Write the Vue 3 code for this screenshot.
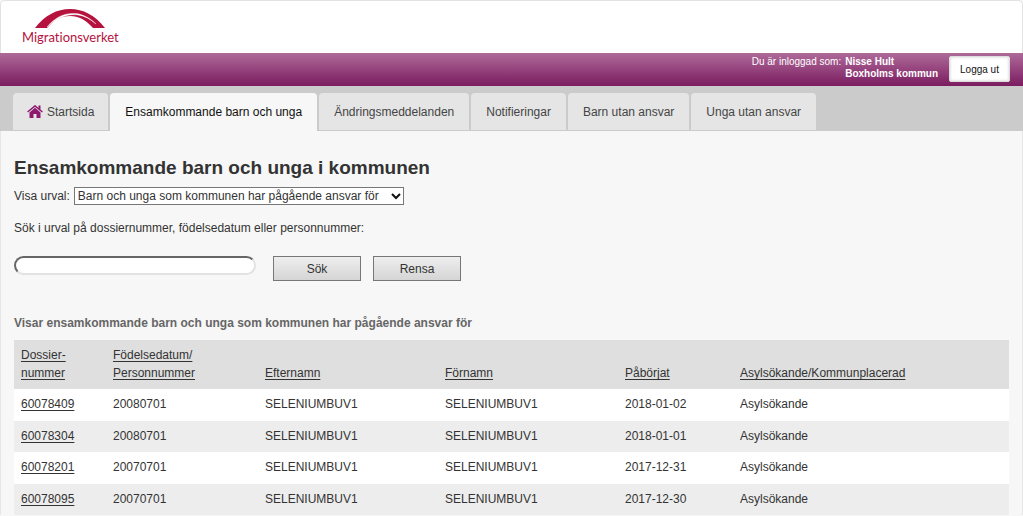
<script setup>
import { ref } from 'vue'

const tabs = [
  { label: 'Startsida', icon: true },
  { label: 'Ensamkommande barn och unga', active: true },
  { label: 'Ändringsmeddelanden' },
  { label: 'Notifieringar' },
  { label: 'Barn utan ansvar' },
  { label: 'Unga utan ansvar' },
]
const query = ref('')
const rows = [
  ['60078409', '20080701', 'SELENIUMBUV1', 'SELENIUMBUV1', '2018-01-02', 'Asylsökande'],
  ['60078304', '20080701', 'SELENIUMBUV1', 'SELENIUMBUV1', '2018-01-01', 'Asylsökande'],
  ['60078201', '20070701', 'SELENIUMBUV1', 'SELENIUMBUV1', '2017-12-31', 'Asylsökande'],
  ['60078095', '20070701', 'SELENIUMBUV1', 'SELENIUMBUV1', '2017-12-30', 'Asylsökande'],
]
</script>

<template>
  <div class="page">
    <header class="brand">
      <a href="#" class="logo">
        <svg class="arch" viewBox="0 0 70 19" aria-hidden="true">
          <path d="M0 19C10 6 22 0 35 0s25 6 35 19H58C51 11 44 7 35 7 26 7 19 11 12 19Z" fill="#b5123e" />
          <path d="M12 18C21 7 32 3 43 4.800 51 6.500 57 11 61 15 56 10.500 50 7 43 5.900 32 4.500 22 9 12 18Z" fill="#fff" stroke="#fff" stroke-width="0.400" />
        </svg>
        <span class="wordmark">Migrationsverket</span>
      </a>
    </header>

    <div class="userbar">
      <span>Du är inloggad som:</span>
      <strong class="who">Nisse Hult<br />Boxholms kommun</strong>
      <button type="button" class="logout">Logga ut</button>
    </div>

    <nav class="tabs">
      <a v-for="t in tabs" :key="t.label" href="#" class="tab" :class="{ active: t.active, 'with-icon': t.icon }">
        <svg v-if="t.icon" class="home" viewBox="0 0 16 13" aria-hidden="true">
          <path d="M8 2.800 13.500 7.500V13H9.500V9H6.500v4H2.500V7.500Z" fill="#8e1a70" />
          <path d="M.6 7 8 .9 15.400 7" fill="none" stroke="#8e1a70" stroke-width="1.500" />
          <path d="M11.500.6h2v4.200l-2-1.600Z" fill="#8e1a70" />
        </svg>
        <span>{{ t.label }}</span>
      </a>
    </nav>

    <main class="content">
      <h1>Ensamkommande barn och unga i kommunen</h1>
      <div class="filter">
        <label for="urval">Visa urval:</label>
        <span class="select-wrap">
          <select id="urval">
            <option>Barn och unga som kommunen har pågående ansvar för</option>
          </select>
          <svg class="chevron" viewBox="0 0 10 7" aria-hidden="true">
            <path d="M1 1l4 4 4-4" fill="none" stroke="#111" stroke-width="2" />
          </svg>
        </span>
      </div>
      <label class="search-label" for="sok">Sök i urval på dossiernummer, födelsedatum eller personnummer:</label>
      <form class="search" @submit.prevent>
        <input id="sok" v-model="query" type="text" />
        <button type="submit" class="btn">Sök</button>
        <button type="button" class="btn" @click="query = ''">Rensa</button>
      </form>
      <h2>Visar ensamkommande barn och unga som kommunen har pågående ansvar för</h2>
      <table>
        <colgroup>
          <col class="c-dossier" />
          <col class="c-birth" />
          <col class="c-name" />
          <col class="c-name" />
          <col class="c-start" />
          <col />
        </colgroup>
        <thead>
          <tr>
            <th><a href="#">Dossier-<br />nummer</a></th>
            <th><a href="#">Födelsedatum/<br />Personnummer</a></th>
            <th><a href="#">Efternamn</a></th>
            <th><a href="#">Förnamn</a></th>
            <th><a href="#">Påbörjat</a></th>
            <th><a href="#">Asylsökande/Kommunplacerad</a></th>
          </tr>
        </thead>
        <tbody>
          <tr v-for="r in rows" :key="r[0]">
            <td><a href="#">{{ r[0] }}</a></td>
            <td v-for="(c, i) in r.slice(1)" :key="i">{{ c }}</td>
          </tr>
        </tbody>
      </table>
    </main>
  </div>
</template>

<style>
body {
  background: #f7f7f7;
}
</style>

<style scoped>
.page,
.page button,
.page input,
.page select {
  font-family: "Liberation Sans", Arial, sans-serif;
  font-size: 12px;
  color: #333;
}
.brand {
  box-sizing: border-box;
  height: 53px;
  border: 1px solid #e2e2e2;
  border-bottom: 0;
  border-radius: 5px 5px 0 0;
  background: #fff;
  display: flex;
}
.logo {
  display: flex;
  flex-direction: column;
  align-items: center;
  margin: 8px 0 0 21px;
  color: #b5123e;
  text-decoration: none;
}
.arch {
  width: 70px;
  height: 19px;
}
.wordmark {
  font-family: Lato, sans-serif;
  font-size: 13px;
  line-height: 18px;
  font-variant-ligatures: none;
}
.userbar {
  height: 33px;
  padding: 0 13px;
  display: flex;
  align-items: flex-start;
  justify-content: flex-end;
  background: linear-gradient(#ae6a99, #7b1c60);
  color: #fff;
  font-size: 10px;
  line-height: 12px;
}
.userbar span,
.who {
  margin-top: 3px;
}
.who {
  margin-left: 4px;
}
.page .logout {
  height: 26px;
  width: 61px;
  margin: 3px 0 0 11px;
  padding: 0;
  border: 1px solid #ddd;
  border-radius: 2px;
  background: #fff;
  box-shadow: inset 0 0 3px #ccc;
  font-size: 10px;
  color: #111;
}
.tabs {
  display: flex;
  gap: 2px;
  height: 38px;
  padding: 7px 13px 0;
  background: #cbcbcb;
}
.tab {
  display: flex;
  align-items: center;
  gap: 4px;
  box-sizing: border-box;
  height: 37px;
  padding: 0 15px;
  border-radius: 4px 4px 0 0;
  background: #e5e5e5;
  color: #444;
  text-decoration: none;
}
.tab.with-icon {
  padding: 0 14px;
}
.tab.active {
  height: 38px;
  background: #f7f7f7;
  color: #111;
}
.home {
  width: 16px;
  height: 13px;
}
.content {
  padding: 25px 13px 0;
  border: 1px solid #e6e6e6;
  border-width: 0 1px;
}
h1 {
  margin: 0;
  font-size: 19px;
  line-height: 24px;
}
.filter {
  display: flex;
  align-items: center;
  gap: 4px;
  margin-top: 7px;
}
.select-wrap {
  position: relative;
}
select {
  appearance: none;
  display: block;
  height: 18px;
  padding: 0 24px 0 3px;
  border: 1px solid #777;
  border-radius: 0;
  background: #fff;
}
.chevron {
  position: absolute;
  right: 3px;
  top: 6px;
  width: 10px;
  height: 7px;
  pointer-events: none;
}
.search-label {
  display: block;
  margin-top: 14px;
  line-height: 18px;
}
.search {
  display: flex;
  align-items: flex-start;
  margin-top: 19px;
}
.search input {
  box-sizing: border-box;
  width: 242px;
  height: 19px;
  margin-right: 5px;
  padding: 0 8px;
  border: 2px solid #e2e2e2;
  border-top-color: #666;
  border-left-color: #666;
  border-radius: 10px;
  background: #fff;
}
.btn {
  width: 88px;
  height: 25px;
  margin-left: 12px;
  padding: 0;
  border: 1px solid #777;
  background: linear-gradient(#eee, #d5d5d5);
}
h2 {
  margin: 33px 0 8px;
  font-size: 12px;
  line-height: 18px;
  color: #666;
}
table {
  width: 100%;
  table-layout: fixed;
  border-collapse: collapse;
}
.c-dossier { width: 92px; }
.c-birth { width: 152px; }
.c-name { width: 180px; }
.c-start { width: 115px; }
th,
td {
  padding: 6px 7px 7px;
  line-height: 18px;
  text-align: left;
}
th {
  font-weight: normal;
  vertical-align: bottom;
  background: #dfdfdf;
}
td {
  background: #ededed;
}
tr:nth-child(odd) td {
  padding-bottom: 8px;
  background: #fff;
}
table a {
  color: #333;
  text-underline-offset: 2px;
}
</style>
